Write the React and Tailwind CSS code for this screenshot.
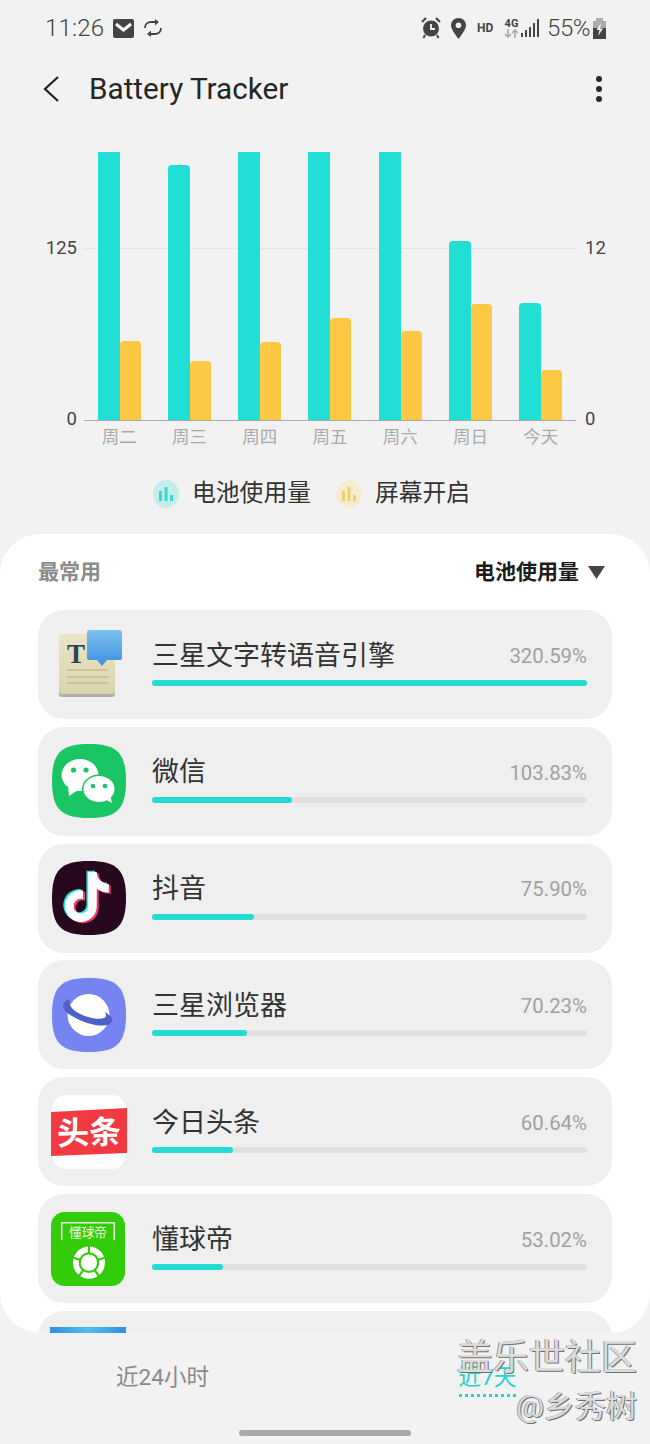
const FONT = "font-['Roboto','Noto_Sans_CJK_SC',sans-serif]";

const days = [
  { d: "周二", a: 268, b: 79 },
  { d: "周三", a: 255, b: 59 },
  { d: "周四", a: 268, b: 78 },
  { d: "周五", a: 268, b: 102 },
  { d: "周六", a: 268, b: 89 },
  { d: "周日", a: 179, b: 116 },
  { d: "今天", a: 117, b: 50 },
];

const SQ = "M37 0C65 0 74 9 74 37S65 74 37 74 0 65 0 37 9 0 37 0Z";

function TtsIcon() {
  return (
    <svg width="74" height="74" viewBox="0 0 74 74">
      <defs>
        <linearGradient id="bub" x1="0" y1="0" x2="0" y2="1">
          <stop offset="0" stopColor="#7cc0ee" />
          <stop offset="1" stopColor="#3c8fe2" />
        </linearGradient>
        <linearGradient id="pap" x1="0" y1="0" x2="0" y2="1">
          <stop offset="0" stopColor="#ebe5c8" />
          <stop offset="1" stopColor="#dcd4ac" />
        </linearGradient>
      </defs>
      <rect x="7" y="9" width="56" height="60" rx="3" fill="#7a7a6c" opacity="0.55" />
      <rect x="7" y="6" width="56" height="60" rx="3" fill="url(#pap)" />
      <text x="15" y="35" fontSize="27" fontWeight="700" fill="#2f4258" fontFamily="Liberation Serif, serif">T</text>
      <path d="M15 42H56M15 49H56M15 55H56" stroke="#b3aa85" strokeWidth="1" />
      <path d="M37 2H68a2 2 0 0 1 2 2V30a2 2 0 0 1-2 2H55L50 38 45 32H37a2 2 0 0 1-2-2V4a2 2 0 0 1 2-2Z" fill="url(#bub)" />
    </svg>
  );
}

function WechatIcon() {
  return (
    <svg width="74" height="74" viewBox="0 0 74 74">
      <path d={SQ} fill="#1ac563" />
      <ellipse cx="28" cy="31" rx="18.5" ry="16" fill="#fff" />
      <path d="M16 42L17 52 26 46Z" fill="#fff" />
      <ellipse cx="47" cy="45" rx="17" ry="14.5" fill="#1ac563" />
      <ellipse cx="47" cy="45" rx="15.5" ry="13" fill="#fff" />
      <path d="M53 55L60 59 58 50Z" fill="#fff" />
      <circle cx="21.5" cy="26" r="2.6" fill="#1ac563" />
      <circle cx="34" cy="26" r="2.6" fill="#1ac563" />
      <circle cx="41" cy="42" r="2.3" fill="#1ac563" />
      <circle cx="53" cy="42" r="2.3" fill="#1ac563" />
    </svg>
  );
}

const TT = "M448,209.91a210.06,210.06,0,0,1-122.77-39.25V349.38A162.55,162.55,0,1,1,185,188.31V278.2a74.62,74.62,0,1,0,52.23,71.18V0l88,0a121.18,121.18,0,0,0,1.86,22.17h0A122.18,122.18,0,0,0,381,102.39a121.43,121.43,0,0,0,67,20.14Z";

function TiktokIcon() {
  return (
    <svg width="74" height="74" viewBox="0 0 74 74">
      <path d={SQ} fill="#28081f" />
      <g transform="translate(13 11) scale(0.0977)">
        <path d={TT} fill="#2be3e3" transform="translate(-18 -12)" />
        <path d={TT} fill="#f0386a" transform="translate(20 14)" />
        <path d={TT} fill="#ffffff" />
      </g>
    </svg>
  );
}

function BrowserIcon() {
  return (
    <svg width="74" height="74" viewBox="0 0 74 74">
      <path d={SQ} fill="#7684f2" />
      <circle cx="36.5" cy="37" r="21" fill="#fff" />
      <path d="M18 21C8 24 9 32 20 38C34 47 56 51 60 44C62 41 58 37 53 34L54 37C55 41 46 42 36 39C26 36 15 30 18 21Z" fill="#4f60c9" />
    </svg>
  );
}

function ToutiaoIcon() {
  return (
    <svg width="74" height="74" viewBox="0 0 74 74" className="overflow-visible">
      <rect x="0" y="0" width="74" height="74" rx="14" fill="#fff" />
      <path d="M-1 17L75 13V58L-1 61Z" fill="#f33a42" />
      <text x="37" y="49" textAnchor="middle" fontSize="32" fontWeight="700" fill="#fff" fontFamily="Noto Sans CJK SC, sans-serif" transform="rotate(-2 37 37)">头条</text>
    </svg>
  );
}

function DqdIcon() {
  return (
    <svg className="-translate-x-px" width="76" height="76" viewBox="0 0 76 76">
      <rect x="0" y="0" width="76" height="76" rx="14" fill="#33cc0a" />
      <path d="M11 29V11H65V29" stroke="#e9f9e0" strokeWidth="1.6" fill="none" />
      <text x="38" y="26" textAnchor="middle" fontSize="13" fill="#e9f9e0" fontFamily="Noto Sans CJK SC, sans-serif">懂球帝</text>
      <circle cx="39" cy="52" r="16.5" fill="#fff" />
      <circle cx="39" cy="52" r="9.5" fill="none" stroke="#33cc0a" strokeWidth="2.2" />
      <path d="M39 42V35M48.5 49L55 47M45 60L49.5 66M33 60L28.5 66M29.5 49L23 47" stroke="#33cc0a" strokeWidth="2.2" />
    </svg>
  );
}

function BlueIcon() {
  return <div className="w-[76px] h-[74px] bg-[linear-gradient(90deg,#2f8fe6,#52bdf0_50%,#2f8fe6)]" />;
}

const apps = [
  { n: "三星文字转语音引擎", p: "320.59%", w: 435, I: TtsIcon },
  { n: "微信", p: "103.83%", w: 140, I: WechatIcon },
  { n: "抖音", p: "75.90%", w: 102, I: TiktokIcon },
  { n: "三星浏览器", p: "70.23%", w: 95, I: BrowserIcon },
  { n: "今日头条", p: "60.64%", w: 81, I: ToutiaoIcon },
  { n: "懂球帝", p: "53.02%", w: 71, I: DqdIcon },
];

function LegendIcon({ bg, fg }) {
  return (
    <svg width="26" height="28" viewBox="0 0 26 28">
      <ellipse cx="13" cy="14" rx="13" ry="14" fill={bg} />
      <rect x="6" y="11" width="3" height="10" fill={fg} />
      <rect x="11.5" y="7" width="3" height="14" fill={fg} />
      <rect x="17" y="15" width="3" height="6" fill={fg} />
    </svg>
  );
}

function StatusLeft() {
  return (
    <div className="flex items-center">
      <span className="text-[24px] leading-none text-[#444] w-[58px] tracking-[0.2px] font-light">11:26</span>
      <svg className="ml-[10px]" width="21" height="19" viewBox="0 0 21 19">
        <rect width="21" height="19" rx="2" fill="#444" />
        <path d="M3 5L10.5 11 18 5" stroke="#fff" strokeWidth="3" fill="none" />
      </svg>
      <svg className="ml-[9px]" width="20" height="18" viewBox="0 0 20 18" fill="none" stroke="#444" strokeWidth="1.8">
        <path d="M2 9C2 5 5 3 8 3H14" />
        <path d="M18 9C18 13 15 15 12 15H6" />
        <path d="M12 0V6.5L16 3Z" fill="#444" stroke="none" />
        <path d="M8 11.5V18L4 15Z" fill="#444" stroke="none" />
      </svg>
    </div>
  );
}

function StatusRight() {
  return (
    <div className="flex items-center">
      <svg width="20" height="22" viewBox="0 0 20 22">
        <circle cx="10" cy="11.5" r="8" fill="#444" />
        <path d="M10 7V12H14" stroke="#f2f2f2" strokeWidth="1.8" fill="none" />
        <path d="M1 5L5 1M19 5L15 1" stroke="#444" strokeWidth="2" />
        <path d="M4 18L2.5 21M16 18L17.5 21" stroke="#444" strokeWidth="2" />
      </svg>
      <svg className="ml-[10px]" width="15" height="21" viewBox="0 0 15 21">
        <path d="M7.5 0C3.4 0 0 3.2 0 7.3 0 12 7.5 21 7.5 21S15 12 15 7.3C15 3.2 11.6 0 7.5 0Z" fill="#444" />
        <circle cx="7.5" cy="7.3" r="2.8" fill="#f2f2f2" />
      </svg>
      <span className="ml-[11px] w-[17px] text-[12px] font-bold text-[#444] leading-none">HD</span>
      <div className="ml-[10px] w-[15px] flex flex-col items-center leading-none">
        <span className="text-[11px] font-bold text-[#444] leading-[11px]">4G</span>
        <svg width="15" height="9" viewBox="0 0 15 9" stroke="#aaa" strokeWidth="1.6" fill="none">
          <path d="M4 0V8M1 5L4 8 7 5" />
          <path d="M11 9V1M8 4L11 1 14 4" />
        </svg>
      </div>
      <svg className="ml-[2px]" width="18" height="18" viewBox="0 0 18 18" fill="#444">
        <rect x="0" y="14" width="2" height="4" />
        <rect x="4" y="11" width="2" height="7" />
        <rect x="8" y="8" width="2" height="10" />
        <rect x="12" y="4" width="2" height="14" />
        <rect x="16" y="0" width="2" height="18" />
      </svg>
      <span className="ml-[8px] w-[42px] text-[24px] leading-none text-[#444] font-light tracking-[-0.4px]">55%</span>
      <svg className="ml-[3px]" width="15" height="21" viewBox="0 0 15 21">
        <rect x="4" y="0" width="7" height="3" fill="#aaa" />
        <rect x="1" y="3" width="13" height="7" fill="#aaa" />
        <rect x="1" y="10" width="13" height="11" fill="#444" />
        <path d="M9 5L4.5 12H7.5L6 18 11 10.5H8Z" fill="#f2f2f2" />
      </svg>
    </div>
  );
}

function Row({ app }) {
  const I = app.I;
  return (
    <div className="h-[109px] shrink-0 rounded-[26px] bg-[#efefef] flex items-center pl-[14px] pr-[25px]">
      <div className="w-[74px] h-[74px] flex items-center justify-center shrink-0">
        <I />
      </div>
      <div className="ml-[26px] flex-1 flex flex-col">
        <div className="flex items-center justify-between h-[40px] mt-[-7px]">
          <span className="text-[27px] leading-none text-[#333]">{app.n}</span>
          <span className="text-[20.4px] leading-none text-[#a0a0a0]">{app.p}</span>
        </div>
        <div className="h-[6px] mt-[4px] rounded-full bg-[#e0e0e0]">
          <div className="h-full rounded-full bg-[#22dcd2]" style={{ width: app.w }} />
        </div>
      </div>
    </div>
  );
}

export default function App() {
  return (
    <div className={`relative w-[650px] h-[1444px] overflow-hidden bg-[#f2f2f2] ${FONT}`}>
      {/* status bar */}
      <div className="h-[56px] flex items-center justify-between pl-[45px] pr-[43px]">
        <StatusLeft />
        <StatusRight />
      </div>

      {/* app bar */}
      <div className="h-[66px] flex items-center pl-[43px] pr-[48px]">
        <svg width="16" height="26" viewBox="0 0 16 26" fill="none" stroke="#222" strokeWidth="2.2">
          <path d="M15 1L2 13 15 25" />
        </svg>
        <span className="ml-[30px] text-[29.7px] leading-none text-[#252525]">Battery Tracker</span>
        <div className="ml-auto flex flex-col gap-[4px]">
          <span className="w-[6px] h-[6px] rounded-full bg-[#2a2a2a]" />
          <span className="w-[6px] h-[6px] rounded-full bg-[#2a2a2a]" />
          <span className="w-[6px] h-[6px] rounded-full bg-[#2a2a2a]" />
        </div>
      </div>

      {/* chart */}
      <div className="mt-[30px] flex h-[268px] text-[18.5px] text-[#444]">
        <div className="w-[77px] flex flex-col items-end pt-[84px] leading-[24px] shrink-0">
          <span>125</span>
          <span className="mt-[147px]">0</span>
        </div>
        <div className="relative ml-[7px] w-[492px] h-[269px] border-b-[1.5px] border-[#aaaaaa] flex items-end shrink-0">
          <div className="absolute left-0 right-0 top-[96px] h-px bg-[#e4e4e4]" />
          {days.map((x) => (
            <div key={x.d} className="relative flex-1 flex items-end justify-center">
              <div
                className={x.a === 268 ? "w-[22px] bg-[#22dfd5]" : "w-[22px] bg-[#22dfd5] rounded-t-[4px]"}
                style={{ height: x.a }}
              />
              <div className="w-[21px] bg-[#fdc945] rounded-t-[4px]" style={{ height: x.b }} />
            </div>
          ))}
        </div>
        <div className="ml-[9px] flex flex-col pt-[84px] leading-[24px]">
          <span>12</span>
          <span className="mt-[147px]">0</span>
        </div>
      </div>
      <div className="ml-[84px] mt-[4px] w-[492px] grid grid-cols-7 text-center text-[17.5px] leading-[26px] text-[#aaaaaa]">
        {days.map((x) => (
          <span key={x.d}>{x.d}</span>
        ))}
      </div>

      {/* legend */}
      <div className="mt-[26px] h-[36px] flex items-center pl-[153px]">
        <LegendIcon bg="#c4eeeb" fg="#3ad7cc" />
        <span className="ml-[13px] text-[23.8px] leading-none text-[#333]">电池使用量</span>
        <div className="ml-[25px]">
          <LegendIcon bg="#f7ecd2" fg="#f0d066" />
        </div>
        <span className="ml-[13px] text-[23.8px] leading-none text-[#333]">屏幕开启</span>
      </div>

      {/* list panel */}
      <div className="mt-[22px] h-[799px] rounded-[40px] bg-white overflow-hidden px-[38px]">
        <div className="h-[76px] flex items-center justify-between pr-[7px]">
          <span className="text-[21px] leading-none font-bold text-[#8c8c8c]">最常用</span>
          <div className="flex items-center">
            <span className="text-[21px] leading-none font-bold text-[#1c1c1c]">电池使用量</span>
            <svg className="ml-[9px]" width="17" height="13" viewBox="0 0 17 13">
              <path d="M0 0H17L8.5 13Z" fill="#444" />
            </svg>
          </div>
        </div>
        <div className="flex flex-col gap-[7.83px]">
          {apps.map((a) => (
            <Row key={a.n} app={a} />
          ))}
          <div className="h-[109px] shrink-0 rounded-[26px] bg-[#efefef] pl-[12px] pt-[16px]">
            <BlueIcon />
          </div>
        </div>
      </div>

      {/* bottom tabs */}
      <div className="grid grid-cols-2 h-[80px] text-[22.6px]">
        <div className="flex justify-center pt-[30px]">
          <span className="leading-[30px] text-[#8a8a8a]">近24小时</span>
        </div>
        <div className="flex justify-center pt-[30px]">
          <span className="leading-[30px] text-[#22d3c8] border-b-[3px] border-dotted border-[#22d3c8] h-[34px]">近7天</span>
        </div>
      </div>
      <div className="mx-auto mt-[17px] w-[172px] h-[6px] rounded-full bg-[#a8a8a8]" />

      {/* watermark */}
      <div className="absolute right-[13px] top-[1334px] flex flex-col items-end text-[#dcdcdc] [text-shadow:1px_1px_0_#6f6f6f,-1px_0_0_#9a9a9a]">
        <span className="text-[36px] leading-[48px]">盖乐世社区</span>
        <span className="text-[31px] leading-[40px] mt-[5px]">@乡秀树</span>
      </div>
    </div>
  );
}
